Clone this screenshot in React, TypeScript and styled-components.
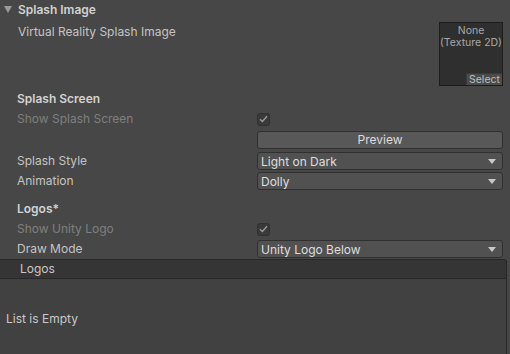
import * as React from 'react';
import styled, { createGlobalStyle } from 'styled-components';

const Global = createGlobalStyle`
  html, body {
    margin: 0;
    padding: 0;
    background: #474747;
  }
  body {
    font-family: Inter, "Noto Sans", sans-serif;
    font-size: 12px;
    color: #c4c4c4;
    width: 510px;
    height: 354px;
    overflow: hidden;
  }
`;

const Inspector = styled.div`
  display: flex;
  flex-direction: column;
  width: 510px;
  height: 354px;
  background: #474747;
`;

const Foldout = styled.div`
  display: flex;
  align-items: center;
  height: 18px;
  padding-left: 4px;
  gap: 6px;
  font-weight: 600;
  color: #d2d2d2;
`;

const Arrow = styled.span`
  width: 0;
  height: 0;
  border-left: 4px solid transparent;
  border-right: 4px solid transparent;
  border-top: 7px solid #9a9a9a;
`;

const ImageRow = styled.div`
  display: flex;
  justify-content: space-between;
  align-items: flex-start;
  margin-top: 4px;
  padding: 0 7px 0 18px;
  height: 64px;
`;

const Label = styled.div<{ $disabled?: boolean }>`
  line-height: 20px;
  color: ${p => (p.$disabled ? '#7f7f7f' : '#c4c4c4')};
`;

const Thumb = styled.div`
  position: relative;
  display: flex;
  flex-direction: column;
  align-items: center;
  width: 64px;
  height: 64px;
  box-sizing: border-box;
  background: #2f2f2f;
  border: 1px solid #1d1d1d;
  color: #a8a8a8;
  font-size: 10.5px;
  line-height: 12px;
  padding-top: 2px;
  white-space: nowrap;
`;

const SelectBtn = styled.div`
  position: absolute;
  right: 0;
  bottom: 0;
  width: 36px;
  height: 12px;
  box-sizing: border-box;
  background: #4b4b4b;
  border-top: 1px solid #3a3a3a;
  border-left: 1px solid #3a3a3a;
  color: #bdbdbd;
  font-size: 10.5px;
  line-height: 11px;
  text-align: center;
`;

const Section = styled.div<{ $top: number }>`
  margin-top: ${p => p.$top}px;
  height: 20px;
  line-height: 20px;
  padding-left: 17px;
  font-weight: 600;
  color: #d2d2d2;
`;

const Row = styled.div<{ $tall?: boolean }>`
  display: grid;
  grid-template-columns: 240px 1fr;
  align-items: center;
  height: ${p => (p.$tall ? 22 : 20)}px;
  padding: 0 7px 0 17px;
`;

const Check = styled.div`
  width: 13px;
  height: 13px;
  box-sizing: border-box;
  border-radius: 3px;
  background: #3a3a3a;
  border: 1px solid #303030;
  display: flex;
  align-items: center;
  justify-content: center;
`;

const Button = styled.div`
  grid-column: 2;
  align-self: start;
  margin-top: 2px;
  height: 18px;
  box-sizing: border-box;
  border-radius: 3px;
  background: #585858;
  border: 1px solid #303030;
  color: #dcdcdc;
  text-align: center;
  line-height: 16px;
`;

const Dropdown = styled.div`
  height: 18px;
  box-sizing: border-box;
  border-radius: 3px;
  background: #515151;
  border: 1px solid #303030;
  color: #dedede;
  display: flex;
  align-items: center;
  justify-content: space-between;
  padding: 0 6px 0 3px;
`;

const Caret = styled.span`
  width: 0;
  height: 0;
  border-left: 4px solid transparent;
  border-right: 4px solid transparent;
  border-top: 5px solid #c8c8c8;
`;

const ListHeader = styled.div`
  width: 507px;
  height: 20px;
  box-sizing: border-box;
  background: #353535;
  border-top: 1px solid #282828;
  border-bottom: 1px solid #282828;
  border-right: 1px solid #282828;
  border-radius: 0 3px 0 0;
  padding-left: 20px;
  line-height: 18px;
  color: #c8c8c8;
`;

const ListBody = styled.div`
  flex: 1;
  width: 507px;
  box-sizing: border-box;
  background: #414141;
  border-right: 1px solid #282828;
  padding: 30px 0 0 6px;
  line-height: 20px;
  color: #c8c8c8;
`;

const Tick = () => (
  <svg width="9" height="8" viewBox="0 0 9 8">
    <path d="M1 4.2 L3.4 6.5 L8 1.2" fill="none" stroke="#9c9c9c" strokeWidth="1.3" />
  </svg>
);

const Field = ({
  label,
  disabled,
  tall,
  children,
}: {
  label?: string;
  disabled?: boolean;
  tall?: boolean;
  children?: React.ReactNode;
}) => (
  <Row $tall={tall}>
    <Label $disabled={disabled}>{label}</Label>
    {children}
  </Row>
);

export default function App() {
  return (
    <Inspector>
      <Global />
      <Foldout>
        <Arrow />
        <span>Splash Image</span>
      </Foldout>
      <ImageRow>
        <Label>Virtual Reality Splash Image</Label>
        <Thumb>
          <span>None</span>
          <span>(Texture 2D)</span>
          <SelectBtn>Select</SelectBtn>
        </Thumb>
      </ImageRow>

      <Section $top={3}>Splash Screen</Section>
      <Field label="Show Splash Screen" disabled>
        <Check>
          <Tick />
        </Check>
      </Field>
      <Field tall>
        <Button>Preview</Button>
      </Field>
      <Field label="Splash Style">
        <Dropdown>
          <span>Light on Dark</span>
          <Caret />
        </Dropdown>
      </Field>
      <Field label="Animation">
        <Dropdown>
          <span>Dolly</span>
          <Caret />
        </Dropdown>
      </Field>

      <Section $top={8}>Logos*</Section>
      <Field label="Show Unity Logo" disabled>
        <Check>
          <Tick />
        </Check>
      </Field>
      <Field label="Draw Mode">
        <Dropdown>
          <span>Unity Logo Below</span>
          <Caret />
        </Dropdown>
      </Field>
      <ListHeader>Logos</ListHeader>
      <ListBody>List is Empty</ListBody>
    </Inspector>
  );
}
